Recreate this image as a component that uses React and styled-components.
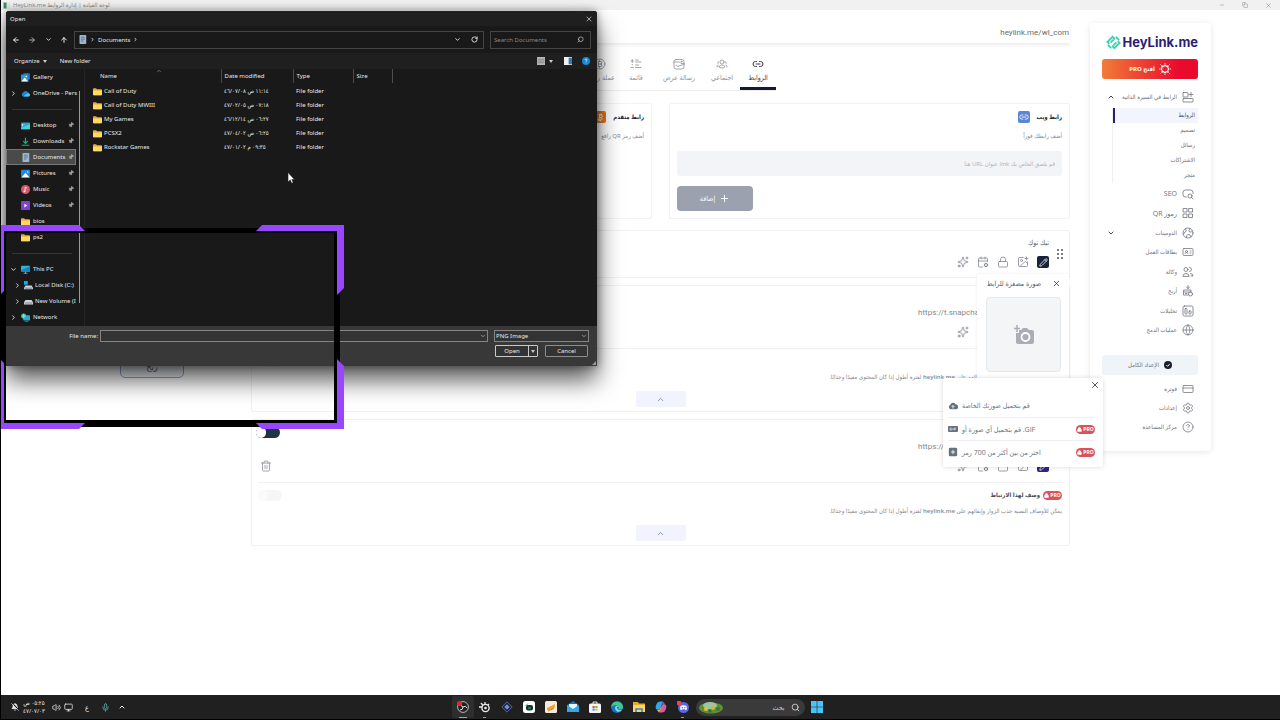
import React from 'react';
import styled, { createGlobalStyle, css } from 'styled-components';
import {
    ArrowLeft, ArrowRight, ArrowUp, BellOff, CalendarCog, ChevronDown, ChevronRight,
    ChevronUp, CircleHelp, CreditCard, Globe, IdCard,
    ImagePlus, Link2, Lock, Mic, Minus, Monitor, Pencil, Pin, Plus, RotateCw,
    Search, Settings, Sparkles, Trash2, Volume2, X, Copy, Bitcoin
} from 'lucide-react';

const GlobalStyle = createGlobalStyle`
    * { box-sizing: border-box; }
    body {
        margin: 0;
        background: #fff;
        font-family: "Open Sans", "DejaVu Sans Condensed", "DejaVu Sans", sans-serif;
        font-size: 8px;
        color: #6b6f7b;
    }
    button, input, select { font: inherit; color: inherit; }
    button { cursor: pointer; border: 0; background: none; padding: 0; }
    a { color: inherit; text-decoration: none; }
    svg { flex: none; display: block; }
`;

/* ---------- desktop ---------- */

const Desktop = styled.div`
    position: relative;
    min-height: 100vh;
    display: flex;
    flex-direction: column;
    border-left: 1px solid #000;
    overflow: hidden;
`;

const TitleBar = styled.header`
    display: flex;
    align-items: center;
    height: 10px;
    padding: 0 8px 0 2px;
    gap: 3px;
    background: #f1f1f1;
    color: #8a8a8a;
    font-size: 6px;
    line-height: 10px;
`;

const TitleText = styled.span`
    flex: 1;
    direction: rtl;
    span { float: left; }
`;

const WindowButtons = styled.div`
    display: flex;
    gap: 17px;
    button { display: block; }
`;

const Page = styled.div`
    flex: 1;
    display: grid;
    grid-template-columns: 250px minmax(0, 1fr) 121px;
    padding-right: 69px;
    align-items: start;
`;

const Preview = styled.aside`
    padding: 344px 0 0 119px;
`;

const PreviewButton = styled.button`
    width: 64px;
    height: 24px;
    border: 1px solid #8fa8cc;
    border-radius: 5px;
    background: #f4f7fc;
    color: #555;
    font-size: 9px;
`;

/* ---------- main column ---------- */

const Main = styled.main`
    margin-right: 20px;
    direction: rtl;
`;

const UrlBar = styled.div`
    height: 22px;
    margin-top: 11px;
    padding: 0 1px;
    line-height: 24px;
    direction: ltr;
    text-align: right;
    color: #6a6a6a;
    font-family: Roboto, sans-serif;
    font-size: 8px;
    box-shadow: 0 2px 3px rgba(0, 0, 0, .08);
`;

const Tabs = styled.nav`
    display: flex;
    width: 231px;
    height: 42px;
    margin: 6px auto 0;
    padding-top: 9px;
    border-bottom: 1px solid #ececec;
`;

const Tab = styled.button`
    display: flex;
    flex-direction: column;
    align-items: center;
    flex: ${p => (p.$wide ? '0 0 50px' : '0 0 36px')};
    gap: 2px;
    font-size: 7px;
    line-height: 12px;
    white-space: nowrap;
    color: ${p => (p.$active ? '#3c404c' : '#8d919b')};
    border-bottom: 3px solid ${p => (p.$active ? '#141a33' : 'transparent')};
`;

const Cards = styled.div`
    display: grid;
    grid-template-columns: 1fr 1fr;
    gap: 17px;
    margin: 12px 0 11px;
`;

const AddCard = styled.section`
    height: 116px;
    padding: 7px 7px;
    border: 1px solid #f3f3f5;
    border-radius: 2px;
    h2 {
        display: flex;
        align-items: center;
        gap: 7px;
        margin: 0;
        font-size: 6px;
        line-height: 12px;
        color: #24262e;
    }
    p {
        margin: 7px 0 9px;
        font-size: 6px;
        line-height: 12px;
        color: #858892;
    }
`;

const Tile = styled.span`
    display: grid;
    place-items: center;
    width: 12px;
    height: 12px;
    border-radius: 2px;
    color: #fff;
    background: ${p => p.$color};
`;

const LinkInput = styled.input`
    display: block;
    width: 100%;
    height: 25px;
    padding: 0 7px;
    border: 0;
    border-radius: 3px;
    background: #f3f4f8;
    font-size: 6px;
    &::placeholder { color: #b0b3bd; opacity: 1; }
`;

const AddButton = styled.button`
    display: flex;
    align-items: center;
    justify-content: center;
    gap: 4px;
    width: 76px;
    height: 25px;
    margin: 10px auto 0 0;
    border-radius: 4px;
    background: #9ba1ae;
    color: #fff;
    font-size: 7px;
`;

const LinkList = styled.div`
    display: flex;
    flex-direction: column;
    gap: 7px;
`;

const LinkCard = styled.section`
    position: relative;
    border: 1px solid #f1f1f4;
    border-radius: 2px;
    padding: 0 6px;
`;

const LinkTop = styled.div`
    display: flex;
    align-items: center;
    height: ${p => (p.$compact ? '46px' : '63px')};
    padding: 0 0 0 2px;
    border-bottom: ${p => (p.$compact ? '0' : '1px solid #f1f1f4')};
`;

const Grip = styled.span`
    display: grid;
    grid-template-columns: 2px 2px;
    gap: 2px;
    width: 14px;
    i { width: 2px; height: 2px; border-radius: 1px; background: #4c4f58; }
`;

const LinkInfo = styled.div`
    flex: 1;
    display: flex;
    flex-direction: column;
    gap: 7px;
    padding: ${p => (p.$low ? '11px 0 0' : '0 0 3px')};
`;

const LinkTitle = styled.div`
    font-size: 7px;
    line-height: 12px;
    color: #565a66;
`;

const LinkUrl = styled.div`
    direction: ltr;
    align-self: flex-start;
    width: 131px;
    font-family: Roboto, sans-serif;
    font-size: 8px;
    line-height: 12px;
    color: #858892;
    white-space: nowrap;
`;

const Tools = styled.div`
    display: flex;
    gap: 8px;
    color: #7b7f89;
`;

const ToolButton = styled.button`
    display: grid;
    place-items: center;
    width: 12px;
    height: 12px;
    border-radius: 2px;
    ${p => p.$fill && css`
        background: ${p.$fill};
        color: #fff;
    `}
`;

const Side = styled.div`
    display: flex;
    flex-direction: column;
    align-items: flex-end;
    align-self: stretch;
    justify-content: space-between;
    padding: 7px 0 10px;
    color: #858892;
    width: 24px;
    margin-left: -4px;
    button { margin-left: 4px; }
`;

const Toggle = styled.input`
    appearance: none;
    position: relative;
    width: 24px;
    height: 11px;
    margin: 0;
    border-radius: 6px;
    background: ${p => (p.$faint ? '#f6f6f7' : '#1f3246')};
    &::after {
        content: '';
        position: absolute;
        left: 0;
        top: 0;
        width: 10px;
        height: 11px;
        border-radius: 5px;
        background: #fafafa;
    }
`;

const Description = styled.div`
    height: 62px;
    padding: 7px 1px 0;
`;

const DescriptionHead = styled.div`
    display: flex;
    align-items: center;
    gap: 3px;
    height: 10px;
    font-size: 6px;
    font-weight: 600;
    color: #4a4d57;
    input { margin-right: auto; margin-left: -1px; }
`;

const DescriptionText = styled.p`
    margin: 5px 0 8px;
    font-size: 6px;
    line-height: 12px;
    color: #858892;
    b { font-weight: 600; }
`;

const Collapse = styled.button`
    display: grid;
    place-items: center;
    width: 50px;
    height: 16px;
    margin: 0 auto;
    border-radius: 2px;
    background: #f1f4fe;
    color: #6b7690;
`;

const ProBadge = styled.span`
    display: inline-flex;
    align-items: center;
    justify-content: center;
    gap: 1px;
    direction: ltr;
    width: 19px;
    height: 9px;
    border-radius: 5px;
    background: #d9535a;
    color: #fff;
    font: 700 5px/9px "Open Sans", sans-serif;
`;

const ThumbPopup = styled.div`
    position: absolute;
    z-index: 1;
    top: 43px;
    right: 0;
    width: 92px;
    height: 110px;
    padding: 4px 8px;
    background: #fff;
    box-shadow: 0 0 3px rgba(0, 0, 0, .08);
    header {
        display: flex;
        align-items: center;
        gap: 11px;
        height: 10px;
        font-size: 7px;
        color: #555963;
        white-space: nowrap;
    }
`;

const ThumbBox = styled.button`
    display: grid;
    place-items: center;
    width: 75px;
    height: 75px;
    margin-top: 9px;
    border: 1px solid #e6e8eb;
    border-radius: 4px;
    background: #f3f5f7;
`;

const MenuPopup = styled.div`
    position: absolute;
    z-index: 2;
    top: 147px;
    right: -34px;
    width: 160px;
    height: 89px;
    padding: 2px 8px 0 5px;
    direction: ltr;
    background: #fff;
    border-radius: 2px;
    box-shadow: 0 0 4px rgba(0, 0, 0, .16);
    color: #33363f;
`;

const MenuClose = styled.button`
    display: block;
    margin: 0 -5px 4px auto;
`;

const MenuItem = styled.button`
    display: flex;
    align-items: center;
    gap: 4px;
    width: 100%;
    height: 23px;
    font-size: 7px;
    color: #6d717c;
    svg { color: #66727f; }
    & + & { border-top: 1px solid #efeff1; }
    ${ProBadge} { margin-left: auto; }
    ${ProBadge} svg { color: #fff; }
`;

/* ---------- account sidebar ---------- */

const Sidebar = styled.aside`
    margin-top: 13px;
    height: 428px;
    padding: 11px 13px 0 12px;
    border-radius: 4px;
    box-shadow: 0 1px 6px rgba(0, 0, 0, .1);
    direction: rtl;
    font-size: 6px;
`;

const Logo = styled.a`
    display: flex;
    align-items: center;
    justify-content: flex-end;
    gap: 1px;
    height: 16px;
    direction: ltr;
    color: #2b1d75;
    font: 700 13px/16px Inter, sans-serif;
`;

const ProButton = styled.button`
    display: flex;
    align-items: center;
    justify-content: center;
    gap: 4px;
    width: 100%;
    height: 20px;
    margin: 9px 0;
    border-radius: 3px;
    direction: ltr;
    background: linear-gradient(90deg, #f27c37, #e90a2e 80%);
    color: #fff;
    font-size: 6px;
    font-weight: 700;
`;

const NavRow = styled.a`
    display: flex;
    align-items: center;
    gap: 5px;
    min-height: 17px;
    padding: 0 4px 0 5px;
    color: #6d717b;
    font-size: ${p => (p.$large ? '7px' : '6px')};
    white-space: nowrap;
    > svg:last-child:not(:first-child) { margin-right: auto; color: #40434c; }
`;

const SubNav = styled.div`
    margin: 3px 0 1px 10px;
    border-left: 1px solid #f0f0f3;
    a {
        display: block;
        height: 15px;
        padding: 0 3px;
        line-height: 15px;
    }
    a:first-child {
        background: #f3f5fe;
        border-left: 2px solid #2b1d75;
        color: #4a4778;
    }
`;

const NavGroup = styled.nav`
    display: grid;
    grid-auto-rows: 1fr;
    height: ${p => p.$height}px;
`;

const Complete = styled.button`
    display: flex;
    align-items: center;
    justify-content: center;
    gap: 5px;
    width: 100%;
    height: 20px;
    margin: 15px 0 4px;
    border-radius: 3px;
    background: #eff4f8;
    color: #6d717b;
`;

/* ---------- open-file dialog ---------- */

const Dialog = styled.div`
    position: absolute;
    z-index: 3;
    left: 5px;
    top: 11px;
    width: 591px;
    border-radius: 3px 3px 0 0;
    background: #191919;
    color: #e8e8e8;
    font: 6px/12px "Noto Sans", "DejaVu Sans Condensed", "DejaVu Sans", sans-serif;
    box-shadow: 0 0 8px rgba(0, 0, 0, .4), 0 14px 24px rgba(0, 0, 0, .65);
`;

const DialogTitle = styled.div`
    display: flex;
    align-items: center;
    justify-content: space-between;
    height: 15px;
    padding: 0 4px;
    border-radius: 3px 3px 0 0;
    background: #1f1f1f;
`;

const DialogNav = styled.div`
    display: flex;
    align-items: center;
    height: 27px;
    padding: 4px 6px;
`;

const NavArrows = styled.div`
    display: flex;
    align-items: center;
    justify-content: space-between;
    width: 56px;
    button:nth-child(2) { color: #aaa; }
`;

const Address = styled.div`
    display: flex;
    flex: 1;
    align-items: center;
    gap: 3px;
    height: 18px;
    margin: 0 6px;
    padding: 0 5px 0 3px;
    border: 1px solid #454545;
    button:nth-last-child(2) { margin: 0 7px 0 auto; }
`;

const SearchField = styled.label`
    display: flex;
    align-items: center;
    width: 101px;
    height: 18px;
    padding: 0 6px 0 3px;
    border: 1px solid #454545;
    input {
        flex: 1;
        min-width: 0;
        padding: 0;
        border: 0;
        background: none;
    }
    input::placeholder { color: #8a8a8a; opacity: 1; }
    svg { transform: scaleX(-1); }
`;

const DialogTools = styled.div`
    display: flex;
    align-items: center;
    height: 16px;
    padding: 0 7px 0 8px;
    background: #1f1f1f;
    > button { display: flex; align-items: center; gap: 3px; }
    > button:nth-child(2) { margin: 0 auto 0 13px; }
    > button:nth-child(4) { margin: 0 11px 0 4px; }
    > button:last-child { margin-left: 10px; }
`;

const Triangle = styled.i`
    border: 2px solid transparent;
    border-top: 3px solid #ccc;
    border-bottom: 0;
`;

const DialogBody = styled.div`
    display: flex;
    height: 257px;
`;

const Tree = styled.div`
    position: relative;
    width: 79px;
    border-right: 1px solid #252525;
`;

const TreeRow = styled.div`
    display: flex;
    align-items: center;
    gap: ${p => (p.$deep ? '2px' : '3px')};
    width: 70px;
    height: 16px;
    padding-left: ${p => (p.$deep ? '8px' : '4px')};
    white-space: nowrap;
    > svg:first-child, > i { flex: none; width: 7px; margin-right: 1px; }
    > svg:last-child {
        margin-left: auto;
        margin-right: 2px;
        color: #aaa;
        transform: rotate(45deg);
    }
    ${p => p.$selected && css`
        background: #4a4a4a;
        outline: 1px solid #777;
        outline-offset: -1px;
    `}
`;

const TreeRule = styled.hr`
    width: 60px;
    height: 1px;
    margin: 8px 0 7px 6px;
    border: 0;
    background: #353535;
`;

const Scrollbar = styled.div`
    position: absolute;
    right: 4px;
    top: 22px;
    width: 1px;
    height: 212px;
    background: #9a9a9a;
`;

const Files = styled.table`
    width: 307px;
    align-self: flex-start;
    table-layout: fixed;
    border-collapse: collapse;
    th, td {
        height: 14px;
        padding: 0 0 0 3px;
        text-align: left;
        font-weight: 400;
        line-height: 14px;
        white-space: nowrap;
    }
    th { border-right: 1px solid #4c4c4c; line-height: 12px; }
    th:first-child { padding-left: 15px; }
    td:first-child { padding-left: 8px; }
    tbody::before { content: ''; display: table-row; height: 1px; }
`;

const NameHeader = styled.span`
    position: relative;
    display: block;
    svg { position: absolute; left: 56px; top: -2px; color: #bbb; }
`;

const FileName = styled.span`
    display: flex;
    align-items: center;
    gap: 2px;
`;

const DialogFooter = styled.div`
    position: relative;
    display: grid;
    grid-template-columns: 85px 1fr 95px;
    column-gap: 6px;
    row-gap: 3px;
    height: 40px;
    padding: 4px 8px 0 6px;
    align-content: start;
    background: #383838;
    > label { text-align: right; margin-right: -1px; }
`;

const NameBox = styled.div`
    position: relative;
    margin-left: -3px;
    input {
        display: block;
        width: 100%;
        height: 12px;
        border: 1px solid #858585;
        background: #333;
    }
    svg { position: absolute; right: 2px; top: 3px; }
`;

const TypeBox = styled(NameBox)`
    margin-left: 0;
    select {
        display: block;
        appearance: none;
        width: 100%;
        height: 12px;
        padding: 0 1px;
        border: 1px solid #858585;
        border-radius: 0;
        background: #333;
        line-height: 10px;
    }
`;

const DialogButtons = styled.div`
    grid-column: 3;
    display: flex;
    justify-content: space-between;
    padding: 0 1px;
`;

const DialogButton = styled.button`
    display: flex;
    align-items: center;
    justify-content: center;
    width: 43px;
    height: 12px;
    border: 1px solid ${p => (p.$primary ? '#c9c9c9' : '#8d8d8d')};
    border-radius: 1px;
    background: #333;
    span { flex: 1; line-height: 10px; }
    i { margin: 0 2px; }
`;

const SplitLine = styled.div`
    width: 1px;
    height: 10px;
    background: #c9c9c9;
`;

const ResizeCorner = styled.span`
    position: absolute;
    right: 1px;
    bottom: 1px;
    border: 2px solid transparent;
    border-right-color: #999;
    border-bottom-color: #999;
`;

const Frame = styled.svg`
    position: absolute;
    z-index: 4;
    left: -1px;
    top: 224px;
`;

const Pointer = styled.svg`
    position: absolute;
    z-index: 5;
    left: 286px;
    top: 172px;
`;

/* ---------- taskbar ---------- */

const Taskbar = styled.footer`
    position: relative;
    z-index: 2;
    display: grid;
    grid-template-columns: 1fr auto 1fr;
    align-items: center;
    height: 25px;
    border-bottom: 1px solid #000;
    background: #202020;
    color: #eee;
    font-size: 7px;
`;

const Tray = styled.div`
    display: flex;
    align-items: center;
    padding-left: 10px;
    > * + * { margin-left: 12px; }
    > :nth-child(2), > :nth-child(4) { margin-left: 3px; }
    > :nth-child(3) { margin-left: 6px; }
    > :last-child { margin-left: 8px; }
`;

const Clock = styled.time`
    width: 24px;
    direction: rtl;
    text-align: center;
    font-size: 6px;
    line-height: 8px;
    white-space: nowrap;
`;

const Apps = styled.div`
    display: flex;
    align-items: center;
    margin-right: 2px;
`;

const AppButton = styled.button`
    position: relative;
    display: grid;
    place-items: center;
    width: 22px;
    height: 22px;
    border-radius: 2px;
    background: ${p => (p.$active ? '#2e2e2e' : 'none')};
    &::after {
        content: '';
        position: absolute;
        bottom: 0;
        width: ${p => (p.$active ? '8px' : '3px')};
        height: 1px;
        background: ${p => (p.$active ? '#5fb8ea' : p.$running ? '#999' : 'transparent')};
    }
`;

const SearchPill = styled.label`
    display: flex;
    align-items: center;
    gap: 6px;
    width: 109px;
    height: 17px;
    margin: 0 1px 0 2px;
    padding: 0 5px 0 3px;
    border-radius: 9px;
    background: #3a3a3a;
    input {
        flex: 1;
        min-width: 0;
        padding: 0;
        border: 0;
        background: none;
        direction: rtl;
    }
    input::placeholder { color: #ccc; opacity: 1; }
`;

const Svg = ({ size = 12, children, box = 12 }) => (
    <svg width={size} height={size} viewBox={`0 0 ${box} ${box}`} fill="none">{children}</svg>
);

/* thin outline icons drawn on a 24 grid */
const Line = ({ size = 12, width = 1.6, children }) => (
    <svg width={size} height={size} viewBox="0 0 24 24" fill="none" stroke="currentColor" strokeWidth={width} strokeLinecap="round" strokeLinejoin="round">{children}</svg>
);

const SocialIcon = () => (
    <Line><circle cx="12" cy="8" r="4" /><path d="M6 17Q12 11 18 17Q18 20 12 20Q6 20 6 17ZM5 7Q2 8 4 11M19 7Q22 8 20 11M2 18Q1 15 4 14M22 18Q23 15 20 14" /></Line>
);

const SlideIcon = () => (
    <Line><rect x="2" y="3" width="20" height="19" rx="4" /><path d="M2 8H13L16 11H22M6 15Q10 19 14 15L22 13" /><circle cx="17" cy="7" r="1" /></Line>
);

const MenuIcon = () => (
    <Line><path d="M11 4H17M11 8H22M11 14H17M11 19H22M2 19H7" /><path d="M4.5 3V9M2 6H7M4.5 13V14" /></Line>
);

const CoinIcon = () => (
    <Line><circle cx="12" cy="12" r="10" /><path d="M9 7V17M9 7H13Q16 7 16 9.5Q16 12 13 12H9M13 12Q16 12 16 14.5Q16 17 13 17H9M11 5V7M11 17V19" /></Line>
);

const BioIcon = () => (
    <Line><rect x="2" y="3" width="10" height="9" rx="1" /><path d="M18 3V11M14 7H22" /><rect x="2" y="15" width="20" height="7" rx="1" /></Line>
);

const SeoIcon = () => (
    <Line><path d="M9 18H7A5 5 0 0 1 2 13V9A5 5 0 0 1 7 4H17A5 5 0 0 1 22 9V11" /><circle cx="16" cy="16" r="4" /><path d="M19 19L22 22" /></Line>
);

const QrIcon = () => (
    <Line><rect x="3" y="3" width="7" height="7" /><rect x="14" y="3" width="7" height="7" /><rect x="3" y="14" width="7" height="7" /><rect x="14" y="14" width="7" height="7" /></Line>
);

const DomainIcon = () => (
    <Line><circle cx="12" cy="12" r="10" /><path d="M7 3Q10 7 7 10Q3 11 3 14M16 3Q12 7 15 10Q19 11 21 8M9 21Q8 16 12 15Q17 14 18 20" /></Line>
);

const AgencyIcon = () => (
    <Line><circle cx="8" cy="7" r="4" /><path d="M15 3A4 4 0 1 1 15 11M2 20Q2 15 8 15Q14 15 14 20ZM17 15Q22 15 22 20H18" /></Line>
);

const EarnIcon = () => (
    <Line><path d="M12 1V7M9 4L12 7L15 4M4 10H18V14H4ZM3 14V20H12M7 17H10" /><circle cx="17" cy="18" r="4" /></Line>
);

const StatsIcon = () => (
    <Line><rect x="2" y="2" width="20" height="20" rx="3" /><rect x="6" y="7" width="4" height="11" rx="1" /><rect x="14" y="12" width="4" height="6" rx="1" /></Line>
);

const FolderIcon = () => (
    <Svg size={9}>
        <path d="M0 2.5Q0 1.5 1 1.5H4L5.5 3H11Q12 3 12 4V10Q12 11 11 11H1Q0 11 0 10Z" fill="#e9a92c" />
        <path d="M0 4.5H12V10Q12 11 11 11H1Q0 11 0 10Z" fill="#ffd868" />
    </Svg>
);

const treeIcons = {
    gallery: <Svg size={9}><rect x="3" width="9" height="9" rx="1" fill="#1766ad" /><rect y="2" width="10" height="10" rx="1" fill="#2f93e4" /><path d="M1 11L5 6L9 11Z" fill="#fff" /><circle cx="7" cy="4.5" r="1" fill="#fff" /></Svg>,
    cloud: <Svg size={9}><path d="M3 10A3 3 0 0 1 2.8 4.5A3.6 3.6 0 0 1 9 4.3A3 3 0 0 1 9.5 10Z" fill="#1288dc" /><path d="M3 10L8 6Q12 5 12 8Q12 10 9.5 10Z" fill="#4fc0f5" /></Svg>,
    desktop: <Svg size={9}><rect y="2" width="12" height="9" rx="1" fill="#27a4cb" /><path d="M0 9L12 4V10Q12 11 11 11H1Q0 11 0 10Z" fill="#45d2df" /><path d="M2 4V7M4 4V5" stroke="#fff" /></Svg>,
    downloads: <Svg size={9}><path d="M6 1V8M3 5.5L6 8.5L9 5.5M1 11H11" stroke="#21b07d" strokeWidth="1.6" /></Svg>,
    documents: <Svg size={9}><rect x="2" width="9" height="12" rx="1" fill="#9db6cc" /><path d="M4 3H9M4 5.5H9M4 8H7" stroke="#48637f" /></Svg>,
    pictures: <Svg size={9}><rect x="0" y="1" width="12" height="11" rx="1" fill="#2486da" /><path d="M1 11L6 5L11 11Z" fill="#fff" /><circle cx="9" cy="4" r="1" fill="#fff" /></Svg>,
    music: <Svg size={9}><circle cx="6" cy="6" r="6" fill="#d2596b" /><path d="M5.5 8.5V3L8 4.2" stroke="#fff" /><circle cx="4.6" cy="8.5" r="1.2" fill="#fff" /></Svg>,
    videos: <Svg size={9}><rect width="12" height="12" rx="1" fill="#7e42d1" /><path d="M4.5 3.5L8.5 6L4.5 8.5Z" fill="#fff" /></Svg>,
    folder: <FolderIcon />,
    pc: <Svg size={9}><rect y="1" width="12" height="8" rx="1" fill="#29b4d6" /><path d="M0 7L12 2V8Q12 9 11 9H1Z" fill="#1583c4" /><path d="M3.5 11H8.5M6 9V11" stroke="#8cc5dc" /></Svg>,
    disk: <Svg size={9}><rect x="0" width="5" height="5" fill="#28a0e4" /><path d="M2 6H10L12 9V11H0V9Z" fill="#cfd4d8" /><path d="M1 9.5H11" stroke="#5e666c" /></Svg>,
    drive: <Svg size={9}><path d="M2 4H10L12 7V10H0V7Z" fill="#d6d9dc" /><path d="M1 8H11" stroke="#60676d" /></Svg>,
    network: <Svg size={9}><rect x="3" y="3" width="9" height="7" rx="1" fill="#29a7d2" /><circle cx="3.6" cy="4" r="3.4" fill="#3fb9a9" /><path d="M1 4H6M3.6 1V7M5 12H10" stroke="#c9eef3" strokeWidth=".8" /></Svg>
};

const tree = [
    ['gallery', 'Gallery'], ['cloud', 'OneDrive - Pers', 'right'], null,
    ['desktop', 'Desktop', '', true], ['downloads', 'Downloads', '', true], ['documents', 'Documents', '', true],
    ['pictures', 'Pictures', '', true], ['music', 'Music', '', true], ['videos', 'Videos', '', true],
    ['folder', 'bios'], ['folder', 'ps2'], null,
    ['pc', 'This PC', 'down'], ['disk', 'Local Disk (C:)', 'right', false, true], ['drive', 'New Volume (I', 'right', false, true],
    ['network', 'Network', 'right']
];

const files = [
    ['Call of Duty', '١١:١٤ ص ٤٦/٠٧/٠٨'],
    ['Call of Duty MWIII', '٠٧:١٨ ص ٤٧/٠٢/٠٥'],
    ['My Games', '٠٦:٢٧ ص ٤٦/١٢/١٤'],
    ['PCSX2', '٠٦:٢٥ ص ٤٧/٠٤/٠٢'],
    ['Rockstar Games', '٠٩:٣٥ م ٤٧/٠١/٠٢']
];

const OpenDialog = () => (
    <Dialog role="dialog" aria-label="Open">
        <DialogTitle>Open<button aria-label="Close"><X size={8} /></button></DialogTitle>
        <DialogNav>
            <NavArrows>
                <button aria-label="Back"><ArrowLeft size={8} strokeWidth={3} /></button>
                <button aria-label="Forward"><ArrowRight size={8} strokeWidth={3} /></button>
                <button aria-label="Recent"><ChevronDown size={7} strokeWidth={3} /></button>
                <button aria-label="Up"><ArrowUp size={8} strokeWidth={3} /></button>
            </NavArrows>
            <Address>
                {treeIcons.documents}
                <ChevronRight size={5} strokeWidth={4} />
                <span>Documents</span>
                <ChevronRight size={5} strokeWidth={4} />
                <button aria-label="History"><ChevronDown size={7} strokeWidth={3} /></button>
                <button aria-label="Refresh"><RotateCw size={7} strokeWidth={3} /></button>
            </Address>
            <SearchField>
                <input aria-label="Search" placeholder="Search Documents" />
                <Search size={7} />
            </SearchField>
        </DialogNav>
        <DialogTools>
            <button>Organize <Triangle /></button>
            <button>New folder</button>
            <button aria-label="View"><Svg size={8}><rect width="12" height="12" fill="#b5b5b5" /><path d="M1 3.5H11M1 6H11M1 8.5H11" stroke="#777" /></Svg></button>
            <button aria-label="View options"><Triangle /></button>
            <button aria-label="Preview pane"><Svg size={8}><rect width="12" height="12" fill="#f2f2f2" /><rect x="7" y="1" width="5" height="10" fill="#277fb4" /></Svg></button>
            <button aria-label="Help"><Svg size={8}><circle cx="6" cy="6" r="6" fill="#1587d4" /><path d="M4.5 4.5Q4.5 3 6 3Q7.5 3 7.5 4.5Q7.5 5.5 6 6.2V7M6 8.5V9.5" stroke="#fff" /></Svg></button>
        </DialogTools>
        <DialogBody>
            <Tree>
                {tree.map((row, i) => row ? (
                    <TreeRow key={row[1]} $selected={row[1] === 'Documents'} $deep={row[4]}>
                        {row[2] === 'right' ? <ChevronRight size={7} strokeWidth={3} /> : row[2] === 'down' ? <ChevronDown size={7} strokeWidth={3} /> : <i />}
                        {treeIcons[row[0]]}
                        <span>{row[1]}</span>
                        {row[3] && <Pin size={6} fill="#aaa" />}
                    </TreeRow>
                ) : <TreeRule key={i} />)}
                <Scrollbar />
            </Tree>
            <Files>
                <colgroup><col width="136" /><col width="72" /><col width="60" /><col width="39" /></colgroup>
                <thead>
                    <tr><th><NameHeader>Name<ChevronUp size={6} /></NameHeader></th><th>Date modified</th><th>Type</th><th>Size</th></tr>
                </thead>
                <tbody>
                    {files.map(([name, date]) => (
                        <tr key={name}>
                            <td><FileName><FolderIcon />{name}</FileName></td>
                            <td><bdi dir="rtl">{date}</bdi></td>
                            <td>File folder</td>
                            <td />
                        </tr>
                    ))}
                </tbody>
            </Files>
        </DialogBody>
        <DialogFooter>
            <label htmlFor="filename">File name:</label>
            <NameBox><input id="filename" /><ChevronDown size={6} /></NameBox>
            <TypeBox>
                <select aria-label="File type"><option>PNG Image</option></select>
                <ChevronDown size={6} />
            </TypeBox>
            <DialogButtons>
                <DialogButton $primary><span>Open</span><SplitLine /><Triangle /></DialogButton>
                <DialogButton>Cancel</DialogButton>
            </DialogButtons>
            <ResizeCorner />
        </DialogFooter>
    </Dialog>
);

const Pro = () => (
    <ProBadge><Lock size={5} fill="#fff" strokeWidth={3} />PRO</ProBadge>
);

const LinkTools = ({ fill }) => (
    <Tools>
        <ToolButton $fill={fill} aria-label="Edit"><Pencil size={9} /></ToolButton>
        <ToolButton aria-label="Image"><ImagePlus size={12} strokeWidth={1.5} /></ToolButton>
        <ToolButton aria-label="Lock"><Lock size={12} strokeWidth={1.5} /></ToolButton>
        <ToolButton aria-label="Schedule"><CalendarCog size={12} strokeWidth={1.5} /></ToolButton>
        <ToolButton aria-label="Highlight"><Sparkles size={12} strokeWidth={1.5} /></ToolButton>
    </Tools>
);

const Handle = () => <Grip><i /><i /><i /><i /><i /><i /></Grip>;

const LinkEntry = ({ url }) => (
    <LinkCard>
        <LinkTop>
            <Handle />
            <LinkInfo $low>
                <LinkUrl>{url}</LinkUrl>
                <LinkTools fill="#33218a" />
            </LinkInfo>
            <Side>
                <Toggle type="checkbox" aria-label="Visible" />
                <button aria-label="Delete"><Trash2 size={12} strokeWidth={1.5} /></button>
            </Side>
        </LinkTop>
        <Description>
            <DescriptionHead>
                <Pro />وصف لهذا الارتباط
                <Toggle type="checkbox" aria-label="Description" $faint />
            </DescriptionHead>
            <DescriptionText>
                يمكن للأوصاف النصية جذب الزوار وإبقائهم على <b>heylink.me</b> لفترة أطول إذا كان المحتوى مفيدًا وجذابًا.
            </DescriptionText>
            <Collapse aria-label="Collapse"><ChevronUp size={9} /></Collapse>
        </Description>
    </LinkCard>
);

const navItems = [
    [SeoIcon, 'SEO'], [QrIcon, 'رموز QR'], [DomainIcon, 'الدومينات', true], [IdCard, 'بطاقات العمل'],
    [AgencyIcon, 'وكالة'], [EarnIcon, 'أربح'], [StatsIcon, 'تحليلات'], [Globe, 'عمليات الدمج']
];

const footItems = [[CreditCard, 'فوترة'], [Settings, 'إعدادات'], [CircleHelp, 'مركز المساعدة']];

const apps = [
    ['OBS Studio', <Svg><circle cx="6" cy="6" r="5.4" fill="#222" stroke="#ddd" strokeWidth=".8" /><path d="M6 6Q3 5 4 2M6 6Q9 4 10 7M6 6Q6 9 3 9" stroke="#ddd" /><circle cx="2.5" cy="2.5" r="2.5" fill="#e02b2b" /></Svg>, 'active'],
    ['GG', <Svg><circle cx="6.5" cy="7" r="3.6" stroke="#eee" strokeWidth="1.4" /><circle cx="6.5" cy="7" r="1.3" fill="#eee" /><path d="M2 2L4 4.5M6 1V3M0 6H3M9 4L10 3" stroke="#eee" strokeWidth="1.3" /></Svg>, 'running'],
    ['Launcher', <Svg><path d="M6 .8L11.2 6L6 11.2L.8 6Z" stroke="#4a68b4" /><path d="M6 3.2L8.8 6L6 8.8L3.2 6Z" fill="#6f8fe0" /></Svg>],
    ['Capture', <Svg><rect width="12" height="12" rx="2.5" fill="#fff" /><rect x="3" y="4" width="7" height="5.5" rx="2" fill="#15352f" /><path d="M2.5 5L5 2.5M5 7H8" stroke="#39a78a" /></Svg>],
    ['Sublime', <Svg><rect width="12" height="12" rx="1.5" fill="#f7ead8" /><path d="M2 7L10 3V6L7 9H2Z" fill="#f0a33f" /><path d="M3 10L9 7" stroke="#cf7d25" /></Svg>],
    ['Mail', <Svg><path d="M0 4L6 0L12 4V11H0Z" fill="#1a6fb8" /><path d="M2 3H10V8H2Z" fill="#e9f5fc" /><path d="M0 4L6 8L12 4V11H0Z" fill="#36a7e5" /></Svg>],
    ['Store', <Svg><path d="M4 3V1H8V3" stroke="#e8e8e8" /><rect y="2.5" width="12" height="9.5" rx="1.5" fill="#f4f4f4" /><path d="M3.5 5H5.7V7H3.5Z" fill="#e8502b" /><path d="M6.3 5H8.5V7H6.3Z" fill="#7cb82f" /><path d="M3.5 7.6H5.7V9.6H3.5Z" fill="#2ba0e2" /><path d="M6.3 7.6H8.5V9.6H6.3Z" fill="#f5b51c" /></Svg>],
    ['Edge', <Svg><circle cx="6" cy="6" r="6" fill="#1a72c2" /><path d="M.3 5A6 6 0 0 1 12 6Q12 8.5 9 8.5Q7 8.3 7.6 6.5Q7 4 4.5 4Q2 4 .3 6Z" fill="#42c98f" /><path d="M4 6Q3.5 9 7 11Q9.5 10.5 11 8.8Q7 10 6 7Q5.5 5 7.5 5.5Q6 4 4 6Z" fill="#83d2f4" /></Svg>],
    ['Explorer', <Svg><path d="M0 1H5L6 2.5H12V11H0Z" fill="#e7a926" /><path d="M0 4H12V11H0Z" fill="#ffd55f" /><path d="M3 11V8H9V11" stroke="#2e88d4" strokeWidth="1.6" /></Svg>],
    ['Copilot', <Svg><path d="M1 8Q0 6 1.5 3Q2.5 .5 5 .5H8L5.5 7Q5 9 3 9Z" fill="#2da8e8" /><path d="M11 4Q12 6 10.5 9Q9.5 11.5 7 11.5H4L6.5 5Q7 3 9 3Z" fill="#d95b9d" /><path d="M4 11.5L2 9H4Q5 9 5.5 7L6 6L6.5 7Z" fill="#f2b43c" /><path d="M8 .5L10 3H8Q7 3 6.5 5L5.8 5Z" fill="#7053d8" /></Svg>],
    ['Discord', <Svg><circle cx="6.5" cy="6.5" r="5.5" fill="#5865f2" /><path d="M3.5 5Q6.5 3.4 9.5 5L10 8.5L8.3 9L7.8 8.3H5.2L4.7 9L3 8.5Z" fill="#fff" /><circle cx="5.3" cy="6.8" r=".8" fill="#5865f2" /><circle cx="7.7" cy="6.8" r=".8" fill="#5865f2" /><circle cx="2" cy="2" r="2.4" fill="#e14b50" /></Svg>, 'running']
];

const App = () => (
    <>
        <GlobalStyle />
        <Desktop>
            <TitleBar>
                <Svg size={7}><rect width="12" height="12" fill="#dfe7e2" /><path d="M1 1H6V11H1Z" fill="#3f8a68" /></Svg>
                <TitleText><span>لوحة القيادة | إدارة الروابط HeyLink.me</span></TitleText>
                <WindowButtons>
                    <button aria-label="Minimize"><Minus size={6} /></button>
                    <button aria-label="Restore"><Copy size={6} /></button>
                    <button aria-label="Close window"><X size={7} /></button>
                </WindowButtons>
            </TitleBar>

            <Page>
                <Preview><PreviewButton>ربح</PreviewButton></Preview>

                <Main>
                    <UrlBar>heylink.me/wl_com</UrlBar>
                    <Tabs>
                        <Tab $active><Link2 size={12} />الروابط</Tab>
                        <Tab><SocialIcon />اجتماعي</Tab>
                        <Tab $wide><SlideIcon />رسالة عرض</Tab>
                        <Tab><MenuIcon />قائمة</Tab>
                        <Tab><CoinIcon />عملة رقمية</Tab>
                    </Tabs>

                    <Cards>
                        <AddCard>
                            <h2>رابط ويب <Tile $color="#5b85d6"><Link2 size={10} /></Tile></h2>
                            <p>أضف رابطك فوراً</p>
                            <LinkInput aria-label="URL" placeholder="قم بلصق الخاص بك link عنوان URL هنا" />
                            <AddButton><Plus size={11} />إضافة</AddButton>
                        </AddCard>
                        <AddCard>
                            <h2>رابط متقدم <Tile $color="#e07a1f"><Bitcoin size={9} /></Tile></h2>
                            <p>أضف رمز QR رافع</p>
                        </AddCard>
                    </Cards>

                    <LinkList>
                        <LinkCard>
                            <LinkTop $compact>
                                <Handle />
                                <LinkInfo>
                                    <LinkTitle>تيك توك</LinkTitle>
                                    <LinkTools fill="#18233a" />
                                </LinkInfo>
                            </LinkTop>
                            <ThumbPopup>
                                <header>
                                    <button aria-label="Close thumbnail"><X size={9} color="#222" /></button>
                                    صورة مصغرة للرابط
                                </header>
                                <ThumbBox aria-label="Add thumbnail">
                                    <Svg size={20} box={20}>
                                        <path d="M4 5H7L9 3H13L15 5H18Q20 5 20 7V17Q20 19 18 19H4Q2 19 2 17V8H5V5Z" fill="#a9aeb5" />
                                        <circle cx="11.5" cy="12" r="4" stroke="#fff" strokeWidth="1.8" />
                                        <path d="M3 0V7M0 3.5H6" stroke="#a9aeb5" strokeWidth="1.5" />
                                    </Svg>
                                </ThumbBox>
                            </ThumbPopup>
                            <MenuPopup>
                                <MenuClose aria-label="Close menu"><X size={10} /></MenuClose>
                                <MenuItem>
                                    <Svg size={10}><path d="M3 10A3 3 0 0 1 2.8 4.5A3.4 3.4 0 0 1 9 4A3 3 0 0 1 9.3 10Z" fill="#66727f" /><path d="M6 9V5.5M4.5 7L6 5.5L7.5 7" stroke="#fff" /></Svg>
                                    <bdi>قم بتحميل صورتك الخاصة</bdi>
                                </MenuItem>
                                <MenuItem>
                                    <Svg size={10}><rect y="2.5" width="12" height="7" rx="1" fill="#66727f" /><path d="M4.5 5H2.5V7.3H4.3V6.3M6 4.8V7.5M7.7 7.5V5H9.7M7.7 6.3H9.3" stroke="#fff" strokeWidth=".7" /></Svg>
                                    <bdi dir="ltr">قم بتحميل أي صورة أو .GIF</bdi>
                                    <Pro />
                                </MenuItem>
                                <MenuItem>
                                    <Svg size={10}><rect x="1" y="1" width="10" height="10" rx="1.5" fill="#66727f" /><path d="M6 3.5V8.5M3.5 6H8.5" stroke="#fff" /></Svg>
                                    <bdi>اختر من بين أكثر من 700 رمز</bdi>
                                    <Pro />
                                </MenuItem>
                            </MenuPopup>
                        </LinkCard>
                        <LinkEntry url="https://t.snapchat.com/" />
                        <LinkEntry url="https://" />
                    </LinkList>
                </Main>

                <Sidebar>
                    <Logo href="#">
                        <Svg size={15} box={16}>
                            <path d="M3 9L1.5 7.5L7 2L9 4M7.5 5.5L5.5 7.5M13 7L14.5 8.5L9 14L7 12M8.5 10.5L10.5 8.5" stroke="#3fd0b4" strokeWidth="2" strokeLinecap="round" />
                            <path d="M11 2.5L13.5 5M2.5 11L5 13.5" stroke="#3fd0b4" strokeWidth="2" strokeLinecap="round" />
                        </Svg>
                        HeyLink.me
                    </Logo>
                    <ProButton>
                        <bdi dir="rtl">افتح PRO</bdi>
                        <Svg size={12}><path d="M6 2L7.3 3.3L9 3L8.9 4.8L10 6L8.9 7.2L9 9L7.3 8.7L6 10L4.7 8.7L3 9L3.1 7.2L2 6L3.1 4.8L3 3L4.7 3.3Z" stroke="#fff" strokeWidth="1.1" /><path d="M6 0V.8M6 11.2V12M0 6H.8M11.2 6H12M1.5 1.5L2.1 2.1M9.9 9.9L10.5 10.5M10.5 1.5L9.9 2.1M2.1 9.9L1.5 10.5" stroke="#fff" /></Svg>
                    </ProButton>
                    <NavRow href="#">
                        <BioIcon />
                        الرابط في السيرة الذاتية
                        <ChevronUp size={8} strokeWidth={3} />
                    </NavRow>
                    <SubNav>
                        <a href="#">الروابط</a>
                        <a href="#">تصميم</a>
                        <a href="#">رسائل</a>
                        <a href="#">الاشتراكات</a>
                        <a href="#">متجر</a>
                    </SubNav>
                    <NavGroup $height={156}>
                        {navItems.map(([Icon, label, more]) => (
                            <NavRow href="#" key={label} $large={/[A-Z]/.test(label)}>
                                <Icon size={12} strokeWidth={1.5} />
                                {label}
                                {more && <ChevronDown size={8} strokeWidth={3} />}
                            </NavRow>
                        ))}
                    </NavGroup>
                    <Complete><Svg size={8}><circle cx="6" cy="6" r="6" fill="#18222e" /><path d="M3.5 6L5.5 8L8.5 4.5" stroke="#fff" strokeWidth="1.4" /></Svg>الإعداد الكامل</Complete>
                    <NavGroup $height={58}>
                        {footItems.map(([Icon, label]) => (
                            <NavRow href="#" key={label}><Icon size={12} strokeWidth={1.5} />{label}</NavRow>
                        ))}
                    </NavGroup>
                </Sidebar>
            </Page>

            <Taskbar>
                <Tray>
                    <BellOff size={8} fill="#eee" />
                    <Clock>٠٥:٢٥ ص<br />٤٧/٠٧/٠٣</Clock>
                    <Volume2 size={9} />
                    <Monitor size={9} />
                    <span>ع</span>
                    <Mic size={9} color="#5fb5ad" />
                    <ChevronUp size={8} strokeWidth={3} />
                </Tray>
                <Apps>
                    {apps.map(([name, icon, state]) => (
                        <AppButton key={name} aria-label={name} $active={state === 'active'} $running={state === 'running'}>{icon}</AppButton>
                    ))}
                    <SearchPill>
                        <svg width="24" height="13" viewBox="0 0 24 13">
                            <ellipse cx="12" cy="7" rx="12" ry="5.5" fill="#5c8f36" />
                            <ellipse cx="11" cy="4.5" rx="7" ry="3.5" fill="#9fc4a0" />
                            <circle cx="7" cy="8" r="2" fill="#d9c63d" /><circle cx="14" cy="7" r="2" fill="#c9b93c" />
                            <circle cx="19" cy="8" r="2" fill="#3d7a2d" /><circle cx="11" cy="10" r="1.5" fill="#2f6b33" />
                        </svg>
                        <input aria-label="Search apps" placeholder="بحث" />
                        <Search size={9} />
                    </SearchPill>
                    <AppButton aria-label="Start"><Svg><path d="M0 0H5.7V5.7H0ZM6.3 0H12V5.7H6.3ZM0 6.3H5.7V12H0ZM6.3 6.3H12V12H6.3Z" fill="#4cc2f5" /></Svg></AppButton>
                </Apps>
            </Taskbar>

            <OpenDialog />

            <Frame width="346" height="207" viewBox="0 224 346 207">
                <path fillRule="evenodd" d="M0 228H340V427H0ZM6 233V420H334V233Z" fill="#000" />
                <path d="M0 225H79L85 231H4V291L0 295Z" fill="#9747ff" />
                <path d="M256 231L262 225H344V288L337 295V231Z" fill="#9747ff" />
                <path d="M0 359L4 363V423H85L79 429H0Z" fill="#9747ff" />
                <path d="M337 359L344 366V429H262L256 423H337Z" fill="#9747ff" />
            </Frame>

            <Pointer width="8" height="12" viewBox="0 0 8 12">
                <path d="M1 .5V10L3.2 8L4.7 11.3L6.2 10.6L4.8 7.5H7.5Z" fill="#fff" stroke="#222" strokeWidth=".6" />
            </Pointer>
        </Desktop>
    </>
);

export default App;
